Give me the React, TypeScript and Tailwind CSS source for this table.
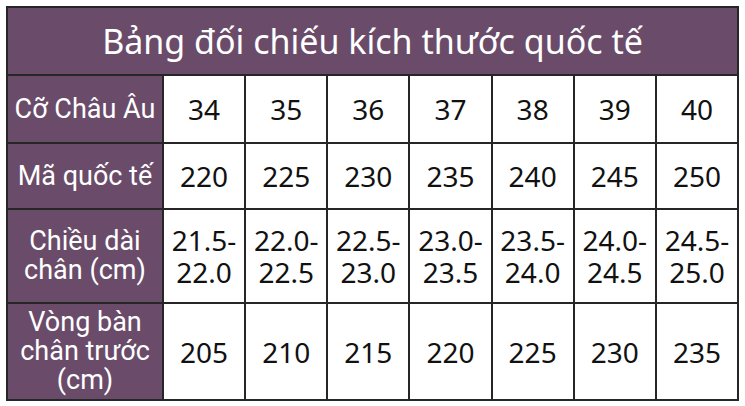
const sizes = ['34', '35', '36', '37', '38', '39', '40'];
const codes = ['220', '225', '230', '235', '240', '245', '250'];
const lengths = [
  ['21.5-', '22.0'],
  ['22.0-', '22.5'],
  ['22.5-', '23.0'],
  ['23.0-', '23.5'],
  ['23.5-', '24.0'],
  ['24.0-', '24.5'],
  ['24.5-', '25.0'],
];
const girths = ['205', '210', '215', '220', '225', '230', '235'];

const labelCls =
  'border-2 border-[#262626] bg-[#6a4c6a] px-0 text-center align-middle text-[27px] leading-[29px] text-white [font-family:Roboto,sans-serif]';
const cellCls =
  'border-2 border-[#262626] bg-white text-center align-middle text-[28px] leading-[32px] text-[#111] [font-family:"Noto_Sans",sans-serif]';

export default function App() {
  return (
    <div className="h-[406px] w-[745px] bg-white p-[6px]">
      <table className="w-[733px] table-fixed border-collapse">
        <colgroup>
          <col className="w-[156px]" />
          {sizes.map((s) => (
            <col key={s} />
          ))}
        </colgroup>
        <tbody>
          <tr className="h-[68px]">
            <td
              colSpan={8}
              className="border-2 border-[#262626] bg-[#6a4c6a] text-center align-middle text-[34px] leading-[40px] text-white [font-family:'Noto_Sans',sans-serif]"
            >
              Bảng đối chiếu kích thước quốc tế
            </td>
          </tr>
          <tr className="h-[68px]">
            <td className={labelCls}>Cỡ Châu Âu</td>
            {sizes.map((v) => (
              <td key={v} className={cellCls}>
                {v}
              </td>
            ))}
          </tr>
          <tr className="h-[66px]">
            <td className={labelCls}>Mã quốc tế</td>
            {codes.map((v) => (
              <td key={v} className={cellCls}>
                {v}
              </td>
            ))}
          </tr>
          <tr className="h-[94px]">
            <td className={labelCls}>
              Chiều dài
              <br />
              chân (cm)
            </td>
            {lengths.map(([a, b]) => (
              <td key={a} className={cellCls}>
                {a}
                <br />
                {b}
              </td>
            ))}
          </tr>
          <tr className="h-[97px]">
            <td className={labelCls}>
              Vòng bàn
              <br />
              chân trước
              <br />
              (cm)
            </td>
            {girths.map((v) => (
              <td key={v} className={cellCls}>
                {v}
              </td>
            ))}
          </tr>
        </tbody>
      </table>
    </div>
  );
}
